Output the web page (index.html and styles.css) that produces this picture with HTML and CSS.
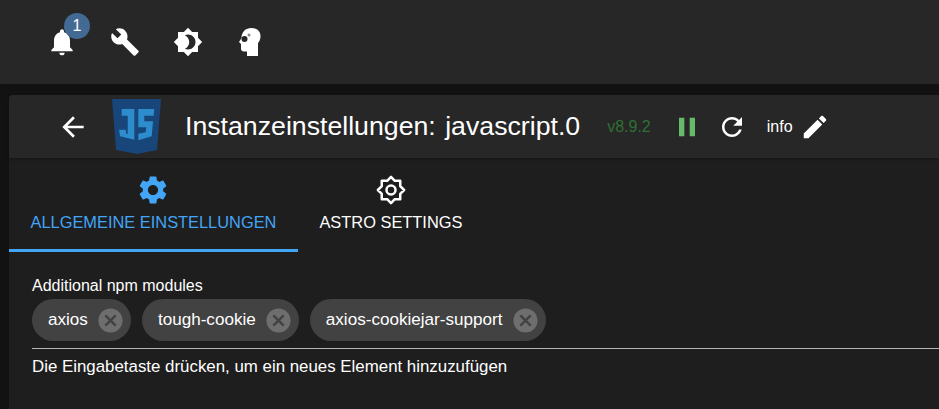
FILE: index.html
```html
<!DOCTYPE html>
<html lang="de">
<head>
    <meta charset="UTF-8">
    <title>Instanzeinstellungen</title>
    <link rel="stylesheet" href="styles.css">
</head>
<body>
<header class="topbar">
    <div class="icon-btn">
        <svg class="icon bell" viewBox="0 0 24 24"><path d="M12 22c1.1 0 2-.9 2-2h-4c0 1.1.89 2 2 2zm6-6v-5c0-3.07-1.64-5.64-4.5-6.32V4c0-.83-.67-1.5-1.5-1.5s-1.5.67-1.5 1.5v.68C7.63 5.36 6 7.92 6 11v5l-2 2v1h16v-1l-2-2z"/></svg>
        <span class="badge">1</span>
    </div>
    <div class="icon-btn">
        <svg class="icon" viewBox="0 0 24 24"><path d="M22.7 19l-9.1-9.1c.9-2.3.4-5-1.5-6.9-2-2-5-2.4-7.4-1.3L9 6 6 9 1.6 4.7C.4 7.1.9 10.1 2.9 12.1c1.9 1.9 4.6 2.4 6.9 1.5l9.1 9.1c.4.4 1 .4 1.4 0l2.3-2.3c.5-.4.5-1.1.1-1.4z"/></svg>
    </div>
    <div class="icon-btn">
        <svg class="icon" viewBox="0 0 24 24"><path d="M20 8.69V4h-4.69L12 .69 8.69 4H4v4.69L.69 12 4 15.31V20h4.69L12 23.31 15.31 20H20v-4.69L23.31 12 20 8.69zM12 18c-.89 0-1.74-.2-2.5-.55C11.56 16.5 13 14.42 13 12s-1.44-4.5-3.5-5.45C10.26 6.2 11.11 6 12 6c3.31 0 6 2.69 6 6s-2.69 6-6 6z"/></svg>
    </div>
    <div class="icon-btn">
        <svg class="icon" viewBox="0 0 30 30">
            <path d="M15.500 1C21 1 24.500 4.500 24.500 9c0 3-1 5.500-2.500 7v13H11v-4.500H8c-2 0-3-1-3-3V17l-2-2 2.500-4c0-6 4-10 10-10z"/>
            <circle class="shades" cx="8.500" cy="12" r="3"/>
            <circle class="shades-far" cx="13" cy="8" r="1.500"/>
        </svg>
    </div>
</header>

<main class="page">
    <section class="card">
        <div class="card-head">
            <svg class="back" viewBox="0 0 24 24"><path d="M20 11H7.830l5.590-5.590L12 4l-8 8 8 8 1.410-1.410L7.830 13H20v-2z"/></svg>
            <svg class="js-logo" viewBox="0 0 49 55">
                <polygon fill="#18457a" points="0,0 49,0 45,51 25,55 4,51"/>
                <polygon fill="#2d8dcc" points="9.700,10 22.300,10 22.300,40.700 8,37.300 7,30.700 13.700,30.700 14.300,34.700 15.700,35 15.700,16.700 9.700,16.700"/>
                <polygon fill="#2d8dcc" points="26.300,10 42.300,10 41.700,16.700 32.300,16.700 32.300,22.300 41,22.300 39.700,37.300 26.300,41.300 26.300,34.700 33.700,33.300 34.300,28.300 26.300,28.300"/>
            </svg>
            <h1 class="title">Instanzeinstellungen: <span class="instance">javascript.0</span></h1>
            <span class="version">v8.9.2</span>
            <svg class="pause" viewBox="0 0 24 24"><path d="M6 19h4V5H6v14zm8-14v14h4V5h-4z"/></svg>
            <svg class="head-icon" viewBox="0 0 24 24"><path d="M17.650 6.350C16.200 4.900 14.210 4 12 4c-4.420 0-7.990 3.580-7.990 8s3.570 8 7.990 8c3.730 0 6.840-2.550 7.730-6h-2.080c-.82 2.330-3.040 4-5.650 4-3.310 0-6-2.690-6-6s2.690-6 6-6c1.660 0 3.140.69 4.220 1.780L13 11h7V4l-2.350 2.350z"/></svg>
            <span class="info">info</span>
            <svg class="head-icon" viewBox="0 0 24 24"><path d="M3 17.250V21h3.750L17.810 9.940l-3.750-3.750L3 17.250zM20.710 7.040c.39-.39.39-1.020 0-1.410l-2.340-2.340c-.39-.39-1.020-.39-1.410 0l-1.830 1.830 3.750 3.750 1.830-1.830z"/></svg>
        </div>

        <nav class="tabs">
            <div class="tab active">
                <svg class="tab-icon" viewBox="0 0 24 24"><path d="M19.140 12.940c.04-.3.06-.61.06-.94 0-.32-.02-.64-.07-.94l2.030-1.580c.18-.14.23-.41.12-.61l-1.920-3.320c-.12-.22-.37-.29-.59-.22l-2.390.96c-.5-.38-1.030-.7-1.620-.94L14.400 2.810c-.04-.24-.24-.41-.48-.41h-3.840c-.24 0-.43.17-.47.41L9.250 5.350c-.59.24-1.130.57-1.620.94l-2.390-.96c-.22-.08-.47 0-.59.22L2.740 8.870c-.12.21-.08.47.12.61l2.030 1.580c-.05.3-.09.63-.09.94s.02.64.07.94l-2.030 1.580c-.18.14-.23.41-.12.61l1.920 3.320c.12.22.37.29.59.22l2.390-.96c.5.38 1.030.7 1.620.94l.36 2.540c.05.24.24.41.48.41h3.840c.24 0 .44-.17.47-.41l.36-2.540c.59-.24 1.130-.56 1.620-.94l2.390.96c.22.08.47 0 .59-.22l1.920-3.320c.12-.22.07-.47-.12-.61l-2.010-1.580zM12 15.600c-1.980 0-3.600-1.620-3.600-3.600s1.620-3.600 3.600-3.600 3.600 1.620 3.600 3.600-1.620 3.600-3.600 3.600z"/></svg>
                <span>Allgemeine Einstellungen</span>
            </div>
            <div class="tab">
                <svg class="tab-icon outline" viewBox="0 0 24 24">
                    <polygon points="12,1.500 15.060,4.610 19.400,4.600 19.390,8.940 22.500,12 19.390,15.060 19.400,19.400 15.060,19.390 12,22.500 8.940,19.390 4.600,19.400 4.610,15.060 1.500,12 4.610,8.940 4.600,4.600 8.940,4.610"/>
                    <circle cx="12" cy="12" r="3.600"/>
                </svg>
                <span>Astro Settings</span>
            </div>
        </nav>

        <div class="field">
            <label class="field-label">Additional npm modules</label>
            <div class="chips">
                <div class="chip"><span>axios</span><svg class="chip-x" viewBox="0 0 24 24"><path d="M12 2C6.470 2 2 6.470 2 12s4.470 10 10 10 10-4.470 10-10S17.530 2 12 2zm5 13.590L15.590 17 12 13.410 8.410 17 7 15.590 10.590 12 7 8.410 8.410 7 12 10.590 15.590 7 17 8.410 13.410 12 17 15.590z"/></svg></div>
                <div class="chip"><span>tough-cookie</span><svg class="chip-x" viewBox="0 0 24 24"><path d="M12 2C6.470 2 2 6.470 2 12s4.470 10 10 10 10-4.470 10-10S17.530 2 12 2zm5 13.590L15.590 17 12 13.410 8.410 17 7 15.590 10.590 12 7 8.410 8.410 7 12 10.590 15.590 7 17 8.410 13.410 12 17 15.590z"/></svg></div>
                <div class="chip"><span>axios-cookiejar-support</span><svg class="chip-x" viewBox="0 0 24 24"><path d="M12 2C6.470 2 2 6.470 2 12s4.470 10 10 10 10-4.470 10-10S17.530 2 12 2zm5 13.590L15.590 17 12 13.410 8.410 17 7 15.590 10.590 12 7 8.410 8.410 7 12 10.590 15.590 7 17 8.410 13.410 12 17 15.590z"/></svg></div>
            </div>
            <p class="helper">Die Eingabetaste drücken, um ein neues Element hinzuzufügen</p>
        </div>
    </section>
</main>
</body>
</html>
```

FILE: styles.css
```css
html, body {
    margin: 0;
    height: 100%;
    overflow: hidden;
}

body {
    background: #121212;
    color: #fff;
    font-family: "Liberation Sans", Arial, sans-serif;
}

.topbar {
    display: flex;
    align-items: center;
    height: 84px;
    padding-left: 38px;
    box-sizing: border-box;
    background: #272727;
}

.icon-btn {
    position: relative;
    display: flex;
    justify-content: center;
    width: 48px;
    height: 48px;
    align-items: center;
    margin-right: 15px;
}

.icon {
    width: 30px;
    height: 30px;
    fill: #fff;
}

.icon.bell {
    width: 32px;
    height: 32px;
}

.shades {
    fill: #272727;
}

.shades-far {
    fill: #8a8a8a;
}

.badge {
    position: absolute;
    top: -5px;
    left: 26px;
    width: 26px;
    height: 26px;
    border-radius: 50%;
    background: #436a93;
    font-size: 16px;
    line-height: 26px;
    text-align: center;
}

.page {
    padding: 11px 0 0 9px;
}

.card {
    height: 320px;
    border-radius: 4px 0 0 0;
    background: #1e1e1e;
}

.card-head {
    display: flex;
    align-items: center;
    height: 63px;
    padding-left: 48px;
    border-radius: 4px 0 0 0;
    background: #272727;
    box-shadow: 0 1px 3px rgba(0, 0, 0, 0.3);
}

.back {
    width: 32px;
    height: 32px;
    fill: #fff;
}

.js-logo {
    width: 49px;
    height: 55px;
    margin: 0 24px 0 23px;
}

.title {
    margin: 0;
    font-size: 26.700px;
    font-weight: 400;
    white-space: nowrap;
}

.instance {
    margin-left: 2px;
}

.version {
    margin-left: 27px;
    color: #2f6f34;
    font-size: 16px;
}

.pause {
    width: 32px;
    height: 32px;
    margin-left: 20px;
    fill: #66bb6a;
}

.head-icon {
    width: 30px;
    height: 30px;
    margin-left: 14px;
    fill: #fff;
}

.info {
    margin-left: 20px;
    font-size: 16px;
}

.head-icon:last-child {
    margin-left: 7px;
}

.tabs {
    display: flex;
    height: 94px;
}

.tab {
    display: flex;
    flex-direction: column;
    align-items: center;
    padding-top: 15px;
    padding-left: 21.500px;
    padding-right: 21.500px;
    box-sizing: border-box;
    font-size: 16.400px;
    text-transform: uppercase;
}

.tab.active {
    color: #42a5f5;
    border-bottom: 3px solid #42a5f5;
}

.tab-icon {
    width: 34px;
    height: 34px;
    margin-bottom: 6px;
    fill: currentColor;
}

.tab-icon.outline {
    width: 30px;
    height: 30px;
    margin-top: 2px;
    margin-bottom: 8px;
    fill: none;
    stroke: currentColor;
    stroke-width: 2;
    stroke-linejoin: round;
}

.field {
    padding: 26px 0 0 23px;
}

.field-label {
    display: block;
    font-size: 16px;
    line-height: 16px;
}

.chips {
    display: flex;
    gap: 11px;
    height: 55px;
    padding-top: 5px;
    box-sizing: border-box;
    border-bottom: 1px solid #b5b5b5;
}

.chip {
    display: flex;
    align-items: center;
    height: 42px;
    padding-left: 16px;
    border-radius: 21px;
    background: #424242;
    font-size: 17.100px;
}

.chip-x {
    width: 29px;
    height: 29px;
    margin: 0 6px 0 8px;
    fill: #6e6e6e;
}

.helper {
    margin: 8px 0 0;
    font-size: 16.870px;
}
```
